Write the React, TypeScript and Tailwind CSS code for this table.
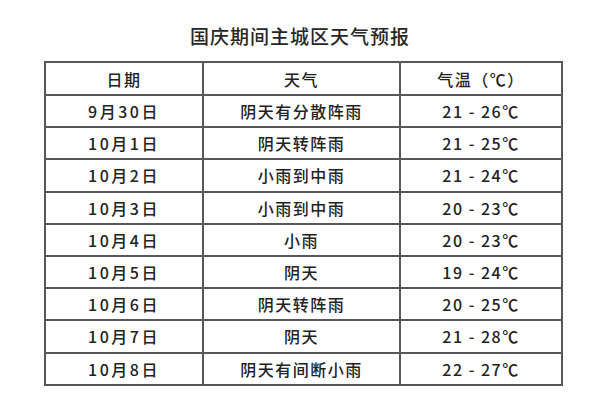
const rows = [
  { date: "9月30日", weather: "阴天有分散阵雨", temp: "21 - 26℃" },
  { date: "10月1日", weather: "阴天转阵雨", temp: "21 - 25℃" },
  { date: "10月2日", weather: "小雨到中雨", temp: "21 - 24℃" },
  { date: "10月3日", weather: "小雨到中雨", temp: "20 - 23℃" },
  { date: "10月4日", weather: "小雨", temp: "20 - 23℃" },
  { date: "10月5日", weather: "阴天", temp: "19 - 24℃" },
  { date: "10月6日", weather: "阴天转阵雨", temp: "20 - 25℃" },
  { date: "10月7日", weather: "阴天", temp: "21 - 28℃" },
  { date: "10月8日", weather: "阴天有间断小雨", temp: "22 - 27℃" },
];

const cell =
  "border-2 border-[#585858] text-center align-middle p-0 leading-none";

const App = () => {
  return (
    <div
      className="w-[600px] h-[400px] bg-white text-[#222] overflow-hidden"
      style={{ fontFamily: '"Noto Sans CJK SC", "Noto Sans", sans-serif' }}
    >
      <h1 className="pt-[25px] h-[61px] text-center text-[19px] leading-[22px] font-medium tracking-[1px] text-[#262626]">
        国庆期间主城区天气预报
      </h1>
      <table className="ml-[44px] w-[517px] border-collapse table-fixed">
        <colgroup>
          <col className="w-[158px]" />
          <col className="w-[197px]" />
          <col className="w-[162px]" />
        </colgroup>
        <thead>
          <tr className="h-[33px] text-[16px] tracking-[1.5px] font-medium">
            <th className={`${cell} font-medium`}>日期</th>
            <th className={`${cell} font-medium`}>天气</th>
            <th className={`${cell} font-medium`}>气温（℃）</th>
          </tr>
        </thead>
        <tbody>
          {rows.map((r) => (
            <tr key={r.date} className="h-[32.2px] text-[16px] tracking-[1.5px] font-medium">
              <td className={`${cell} tracking-[2.5px]`}>{r.date}</td>
              <td className={cell}>{r.weather}</td>
              <td className={cell}>{r.temp}</td>
            </tr>
          ))}
        </tbody>
      </table>
    </div>
  );
};

export default App;
